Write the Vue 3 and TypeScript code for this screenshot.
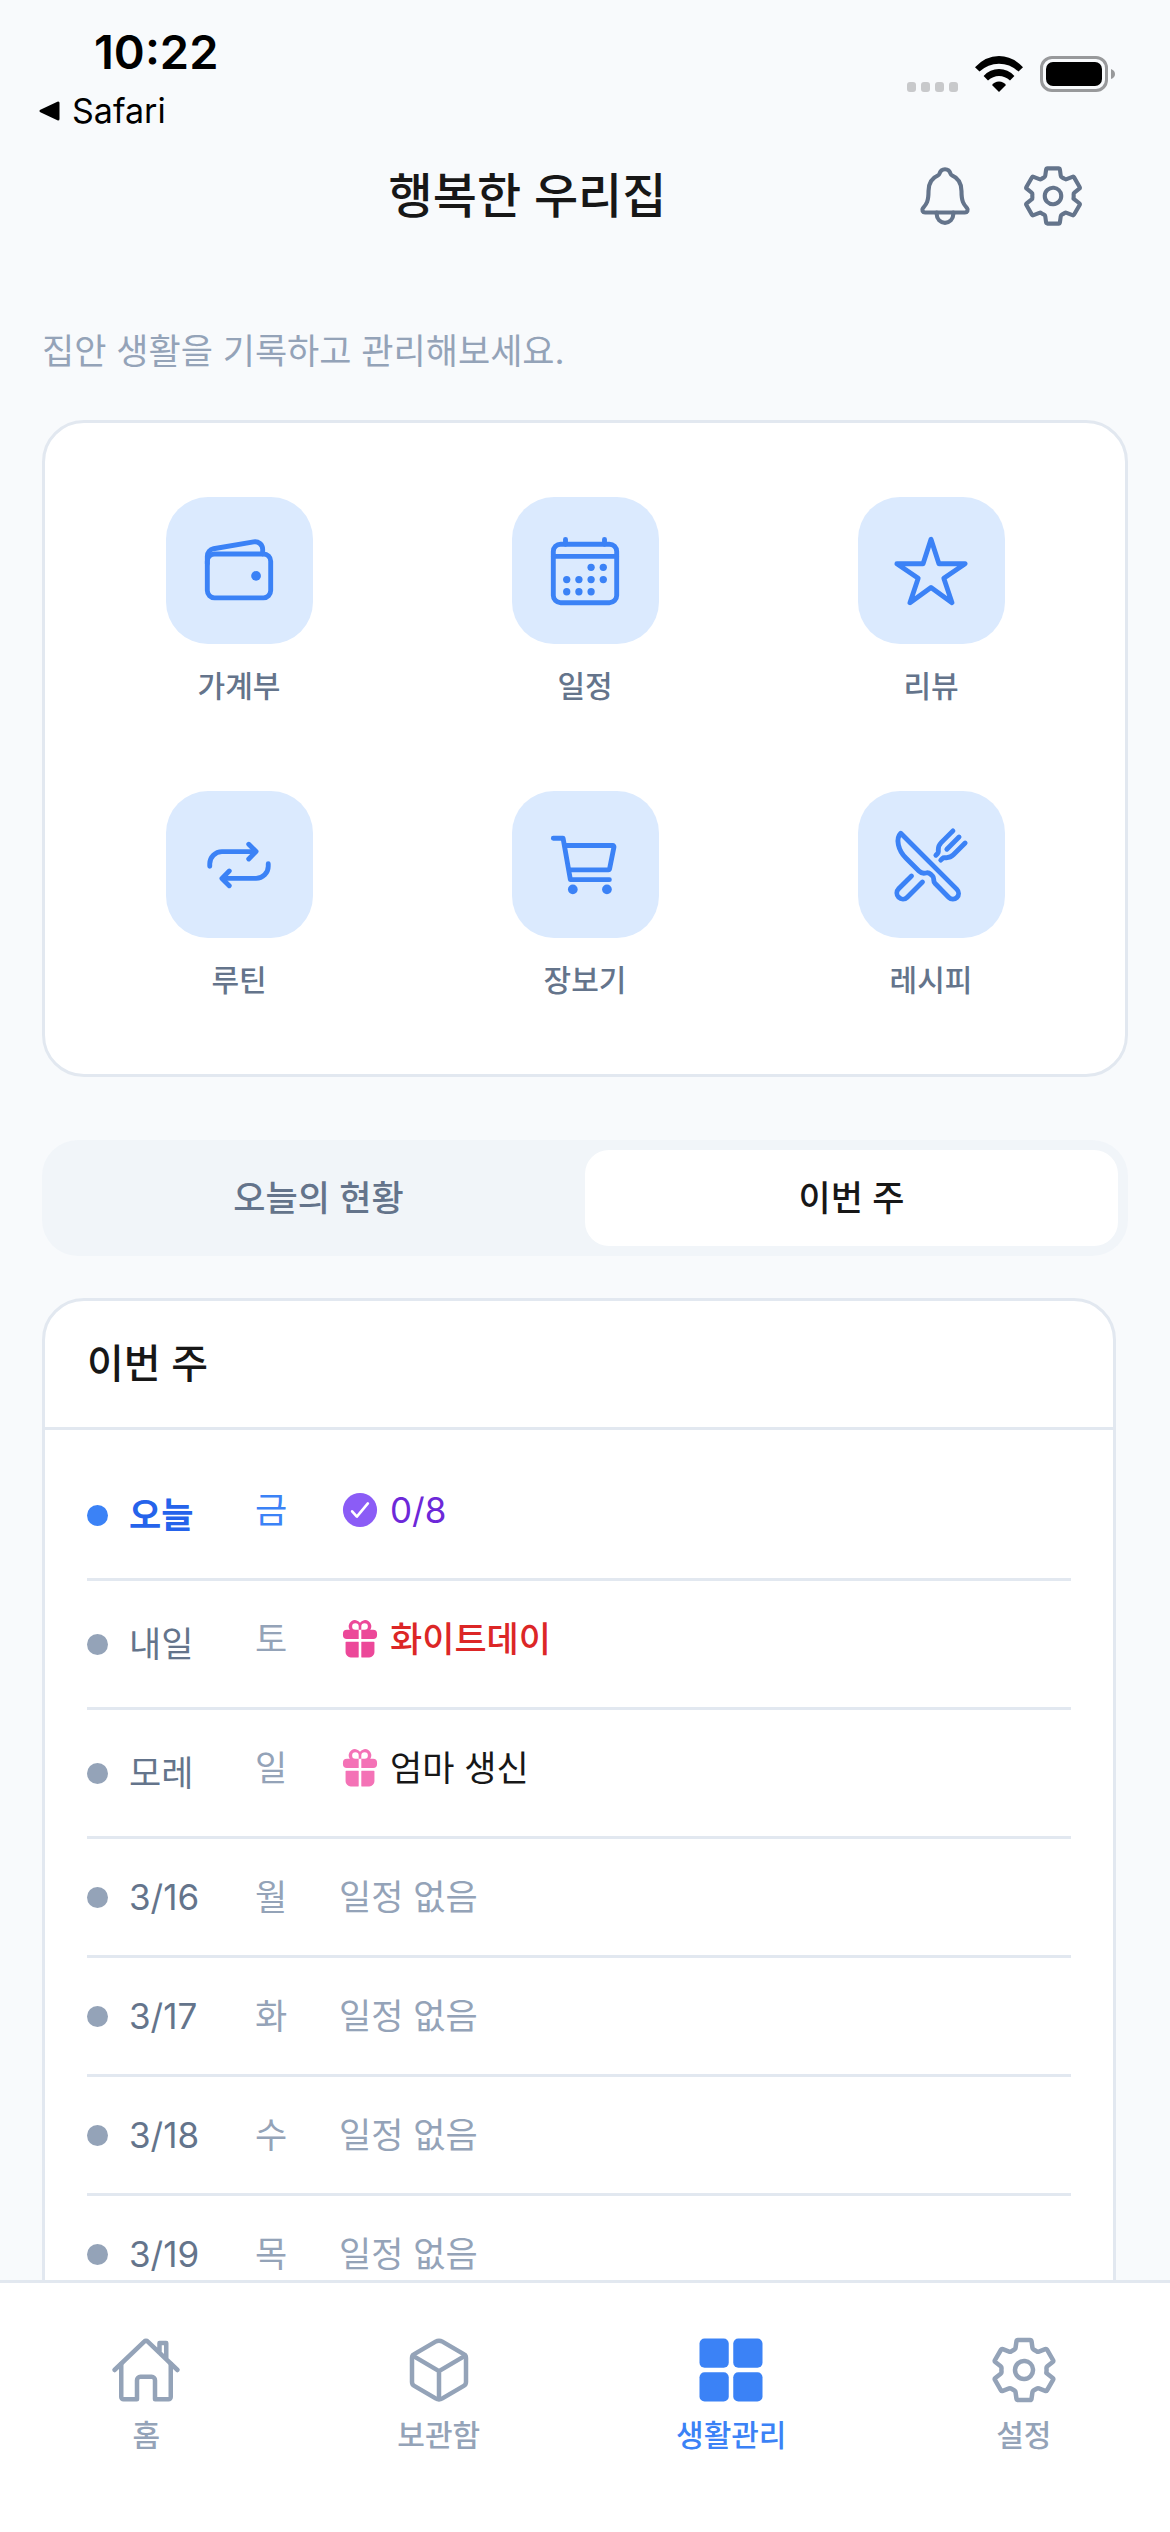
<script setup lang="ts">
import { ref } from 'vue'

interface Icon {
  strokes?: string[]
  fills?: string[]
  dots?: [number, number, number][]
}

const gear: Icon = {
  strokes: [
    'M262.29 192.31a64 64 0 1 0 57.4 57.4 64.13 64.13 0 0 0-57.4-57.4ZM416.39 256a154.34 154.34 0 0 1-1.53 20.79l45.21 35.46A10.81 10.81 0 0 1 462.52 326l-42.77 74a10.81 10.81 0 0 1-13.14 4.59l-44.9-18.08a16.11 16.11 0 0 0-15.17 1.75A164.48 164.48 0 0 1 325 400.8a15.94 15.94 0 0 0-8.82 12.14l-6.73 47.89A11.08 11.08 0 0 1 298.77 470h-85.54a11.11 11.11 0 0 1-10.69-8.87l-6.72-47.82a16.07 16.07 0 0 0-9-12.22 155.3 155.3 0 0 1-21.46-12.57 16 16 0 0 0-15.11-1.71l-44.89 18.07a10.81 10.81 0 0 1-13.14-4.58l-42.77-74a10.8 10.8 0 0 1 2.45-13.75l38.21-30a16.05 16.05 0 0 0 6-14.08c-.36-4.17-.58-8.33-.58-12.5s.21-8.27.58-12.35a16 16 0 0 0-6.07-13.94l-38.19-30A10.81 10.81 0 0 1 49.48 186l42.77-74a10.81 10.81 0 0 1 13.14-4.59l44.9 18.08a16.11 16.11 0 0 0 15.17-1.75A164.48 164.48 0 0 1 187 111.2a15.94 15.94 0 0 0 8.82-12.14l6.73-47.89A11.08 11.08 0 0 1 213.23 42h85.54a11.11 11.11 0 0 1 10.69 8.87l6.72 47.82a16.07 16.07 0 0 0 9 12.22 155.3 155.3 0 0 1 21.46 12.57 16 16 0 0 0 15.11 1.71l44.89-18.07a10.81 10.81 0 0 1 13.14 4.58l42.77 74a10.8 10.8 0 0 1-2.45 13.75l-38.21 30a16.05 16.05 0 0 0-6.05 14.08c.33 4.14.55 8.3.55 12.47Z',
  ],
}

const bell: Icon = {
  strokes: [
    'M427.68 351.43C402 320 383.87 304 383.87 217.35 383.87 138 343.35 109.73 310 96c-4.43-1.82-8.6-6-9.95-10.55C294.2 65.54 277.8 48 256 48s-38.21 17.55-44 37.47c-1.35 4.6-5.52 8.71-9.95 10.53-33.39 13.75-73.87 41.92-73.87 121.35C128.13 304 110 320 84.32 351.43 73.68 364.45 83 384 101.61 384h308.88c18.51 0 27.77-19.61 17.19-32.57Z',
    'M320 384v16a64 64 0 0 1-128 0v-16',
  ],
}

const actions: { label: string; icon: Icon }[] = [
  { label: '알림', icon: bell },
  { label: '설정', icon: gear },
]

const features: { label: string; icon: Icon }[] = [
  {
    label: '가계부',
    icon: {
      strokes: [
        'M96 144h320a48 48 0 0 1 48 48v192a48 48 0 0 1-48 48H96a48 48 0 0 1-48-48V192a48 48 0 0 1 48-48Z',
        'M411.36 144v-30A50 50 0 0 0 352 64.9L88.64 109.85A50 50 0 0 0 48 159v49',
      ],
      dots: [[368, 288, 32]],
    },
  },
  {
    label: '일정',
    icon: {
      strokes: [
        'M96 80h320a48 48 0 0 1 48 48v288a48 48 0 0 1-48 48H96a48 48 0 0 1-48-48V128a48 48 0 0 1 48-48Z',
        'M128 48v32M384 48v32M464 160H48',
      ],
      dots: [
        [296, 232, 24], [376, 232, 24],
        [136, 312, 24], [216, 312, 24], [296, 312, 24], [376, 312, 24],
        [136, 392, 24], [216, 392, 24], [296, 392, 24],
      ],
    },
  },
  {
    label: '리뷰',
    icon: { strokes: ['M480 208H308L256 48l-52 160H32l140 96-54 160 138-100 138 100-54-160Z'] },
  },
  {
    label: '루틴',
    icon: {
      strokes: [
        'M320 120l48 48-48 48',
        'M352 168H144a80.24 80.24 0 0 0-80 80v16M192 392l-48-48 48-48',
        'M160 344h208a80.24 80.24 0 0 0 80-80v-16',
      ],
    },
  },
  {
    label: '장보기',
    icon: {
      strokes: [
        'M48 80h64l48 272h256',
        'M160 288h249.44a8 8 0 0 0 7.85-6.43l28.8-144a8 8 0 0 0-7.85-9.57H128',
      ],
      dots: [[176, 416, 32], [400, 416, 32]],
    },
  },
  {
    label: '레시피',
    icon: {
      strokes: [
        'M57.49 47.74l368.43 368.43a37.28 37.28 0 0 1 0 52.72 37.29 37.29 0 0 1-52.72 0l-90-91.55a32 32 0 0 1-9.2-22.43v-5.53a32 32 0 0 0-9.52-22.78l-11.62-10.73a32 32 0 0 0-29.8-7.44 48.53 48.53 0 0 1-46.56-12.63l-85.43-85.44C40.39 159.68 21.74 83.15 57.49 47.74Z',
        'M400 32l-77.25 77.25A64 64 0 0 0 304 154.51v14.86a16 16 0 0 1-4.69 11.32L288 192M320 224l11.31-11.31a16 16 0 0 1 11.32-4.69h14.86a64 64 0 0 0 45.26-18.75L480 112M440 72l-80 80M200 368l-99.72 100.28a40 40 0 0 1-56.56 0 40 40 0 0 1 0-56.56L128 328',
      ],
    },
  },
]

const tabs = ['오늘의 현황', '이번 주']
const activeTab = ref(1)

type EventKind = 'routine' | 'holiday' | 'birthday'

interface Day {
  date: string
  weekday: string
  today?: boolean
  event?: { kind: EventKind; text: string }
}

const week: Day[] = [
  { date: '오늘', weekday: '금', today: true, event: { kind: 'routine', text: '0/8' } },
  { date: '내일', weekday: '토', event: { kind: 'holiday', text: '화이트데이' } },
  { date: '모레', weekday: '일', event: { kind: 'birthday', text: '엄마 생신' } },
  { date: '3/16', weekday: '월' },
  { date: '3/17', weekday: '화' },
  { date: '3/18', weekday: '수' },
  { date: '3/19', weekday: '목' },
]

const navItems: { label: string; icon: Icon; active?: boolean }[] = [
  {
    label: '홈',
    icon: {
      strokes: [
        'M80 212v236a16 16 0 0 0 16 16h96V328a24 24 0 0 1 24-24h80a24 24 0 0 1 24 24v136h96a16 16 0 0 0 16-16V212',
        'M480 256L266.89 52c-5-5.28-16.69-5.34-21.78 0L32 256M400 179V64h-48v69',
      ],
    },
  },
  {
    label: '보관함',
    icon: {
      strokes: [
        'M448 341.37V170.61A32 32 0 0 0 432.11 143l-152-88.46a47.94 47.94 0 0 0-48.24 0L79.89 143A32 32 0 0 0 64 170.61v170.76A32 32 0 0 0 79.89 369l152 88.46a48 48 0 0 0 48.24 0l152-88.46A32 32 0 0 0 448 341.37Z',
        'M69 153.99l187 110 187-110M256 463.99v-200',
      ],
    },
  },
  {
    label: '생활관리',
    active: true,
    icon: {
      fills: [
        'M68 32h136a36 36 0 0 1 36 36v136a36 36 0 0 1-36 36H68a36 36 0 0 1-36-36V68a36 36 0 0 1 36-36Z',
        'M308 32h136a36 36 0 0 1 36 36v136a36 36 0 0 1-36 36H308a36 36 0 0 1-36-36V68a36 36 0 0 1 36-36Z',
        'M68 272h136a36 36 0 0 1 36 36v136a36 36 0 0 1-36 36H68a36 36 0 0 1-36-36V308a36 36 0 0 1 36-36Z',
        'M308 272h136a36 36 0 0 1 36 36v136a36 36 0 0 1-36 36H308a36 36 0 0 1-36-36V308a36 36 0 0 1 36-36Z',
      ],
    },
  },
  { label: '설정', icon: gear },
]
</script>

<template>
  <div class="app">
    <div class="status">
      <div class="status-left">
        <span class="clock">10:22</span>
        <a class="back" href="#">
          <svg class="back-arrow" viewBox="0 0 22 20" aria-hidden="true">
            <path d="M20 2v16L3 10Z" fill="currentColor" stroke="currentColor" stroke-width="3" stroke-linejoin="round" />
          </svg>
          Safari
        </a>
      </div>
      <div class="status-right" aria-hidden="true">
        <svg class="signal" viewBox="0 0 51 36">
          <rect v-for="i in 4" :key="i" :x="(i - 1) * 14" y="26" width="9" height="10" rx="3" fill="#c8c9cb" />
        </svg>
        <svg class="wifi" viewBox="0 0 48 36">
          <path d="M0 11.2Q10.500 0 24 0T48 11.200L43.500 15.600Q35 7.700 24 7.700T4.500 15.600Z" fill="#000" />
          <path d="M8.600 19.900Q15 13 24 13T39.400 19.900L35 24.500Q30 20 24 20T13 24.500Z" fill="#000" />
          <path d="M17 29Q19.500 25.500 24 25.500T31 29L24 36Z" fill="#000" />
        </svg>
        <svg class="battery" viewBox="0 0 75 36">
          <rect x="1.500" y="1.500" width="65" height="33" rx="10.500" fill="none" stroke="#98999b" stroke-width="3" />
          <rect x="6" y="6" width="56" height="24" rx="7" fill="#000" />
          <path d="M71 13q4 1.500 4 5t-4 5Z" fill="#98999b" />
        </svg>
      </div>
    </div>

    <header class="header">
      <h1 class="title">행복한 우리집</h1>
      <button v-for="action in actions" :key="action.label" class="action" type="button" :aria-label="action.label">
        <svg class="icon icon-action" viewBox="0 0 512 512">
          <path v-for="d in action.icon.strokes" :key="d" :d="d" />
        </svg>
      </button>
    </header>

    <main class="content">
      <p class="subtitle">집안 생활을 기록하고 관리해보세요.</p>

      <section class="features">
        <a v-for="feature in features" :key="feature.label" class="feature" href="#">
          <span class="tile">
            <svg class="icon icon-feature" viewBox="0 0 512 512" aria-hidden="true">
              <path v-for="d in feature.icon.strokes" :key="d" :d="d" />
              <circle v-for="[cx, cy, r] in feature.icon.dots" :key="`${cx}-${cy}`" class="solid" :cx="cx" :cy="cy" :r="r" />
            </svg>
          </span>
          <span class="small-label">{{ feature.label }}</span>
        </a>
      </section>

      <div class="tabs" role="tablist">
        <button
          v-for="(tab, i) in tabs"
          :key="tab"
          class="tab"
          :class="{ active: i === activeTab }"
          type="button"
          role="tab"
          :aria-selected="i === activeTab"
          @click="activeTab = i"
        >
          {{ tab }}
        </button>
      </div>

      <section class="week">
        <h2 class="week-title">이번 주</h2>
        <ul class="days">
          <li v-for="day in week" :key="day.date" class="day" :class="{ today: day.today }">
            <span class="dot"></span>
            <span class="date">{{ day.date }}</span>
            <div class="plan" :class="{ filled: day.event }">
              <span class="weekday">{{ day.weekday }}</span>
              <span v-if="day.event" class="event" :class="day.event.kind">
                <svg class="event-icon" viewBox="0 0 512 512" aria-hidden="true">
                  <template v-if="day.event.kind === 'routine'">
                    <circle cx="256" cy="256" r="208" fill="currentColor" />
                    <path d="M352 176L217.600 336 160 272" fill="none" stroke="#fff" stroke-width="32" stroke-linecap="round" stroke-linejoin="round" />
                  </template>
                  <template v-else>
                    <path
                      fill="currentColor"
                      fill-rule="evenodd"
                      d="M240 144v108a4 4 0 0 1-4 4H96a48 48 0 0 1-48-48v-16a48 48 0 0 1 48-48h35.220A72 72 0 0 1 256 58.910 72 72 0 0 1 380.780 144H416a48 48 0 0 1 48 48v16a48 48 0 0 1-48 48H276a4 4 0 0 1-4-4V144ZM200 144h40v-40a40 40 0 1 0-40 40ZM272 104v40h40a40 40 0 1 0-40-40Z"
                    />
                    <path fill="currentColor" d="M88 288h148a4 4 0 0 1 4 4v184a4 4 0 0 1-4 4h-92a64 64 0 0 1-64-64V296a8 8 0 0 1 8-8ZM276 288h148a8 8 0 0 1 8 8v120a64 64 0 0 1-64 64h-92a4 4 0 0 1-4-4V292a4 4 0 0 1 4-4Z" />
                  </template>
                </svg>
                <span class="event-text">{{ day.event.text }}</span>
              </span>
              <span v-else class="empty">일정 없음</span>
            </div>
          </li>
        </ul>
      </section>
    </main>

    <nav class="nav">
      <a v-for="item in navItems" :key="item.label" class="nav-item" :class="{ active: item.active }" href="#">
        <svg class="icon icon-nav" viewBox="0 0 512 512" aria-hidden="true">
          <path v-for="d in item.icon.strokes" :key="d" :d="d" />
          <path v-for="d in item.icon.fills" :key="d" class="solid" :d="d" />
        </svg>
        <span>{{ item.label }}</span>
      </a>
    </nav>
  </div>
</template>

<style>
body {
  margin: 0;
  background: #f8fafc;
}
</style>

<style scoped>
.app {
  display: flex;
  flex-direction: column;
  height: 100vh;
  overflow: hidden;
  background: #f8fafc;
  color: #171717;
  font-family: Inter, "Noto Sans CJK KR", sans-serif;
  font-size: 35px;
  line-height: 52px;
}

a {
  color: inherit;
  text-decoration: none;
}

button {
  padding: 0;
  border: 0;
  background: none;
  color: inherit;
  font: inherit;
}

.icon {
  display: block;
  fill: none;
  stroke: currentColor;
  stroke-width: 32px;
  stroke-linecap: round;
  stroke-linejoin: round;
}

.solid {
  fill: currentColor;
  stroke: none;
}

.status {
  display: flex;
  flex: none;
  justify-content: space-between;
  height: 141px;
  color: #000;
}

.status-left {
  display: flex;
  flex-direction: column;
  padding: 26px 0 0 38px;
}

.clock {
  padding-left: 56px;
  font-size: 47px;
  font-weight: 600;
}

.back {
  display: flex;
  align-items: center;
  gap: 12px;
  margin-top: 7px;
  font-size: 34px;
}

.back-arrow {
  width: 22px;
  height: 20px;
}

.status-right {
  display: flex;
  gap: 17px;
  padding: 56px 55px 0 0;
}

.status-right svg {
  height: 36px;
}

.signal {
  width: 51px;
}

.wifi {
  width: 48px;
}

.battery {
  width: 75px;
}

.header {
  display: flex;
  flex: none;
  align-items: center;
  height: 110px;
  padding: 0 63px 0 164px;
}

.title {
  flex: 1;
  margin: 0;
  font-size: 48px;
  font-weight: 500;
  text-align: center;
}

.action {
  padding: 21px;
  color: #64748b;
}

.icon-action {
  width: 66px;
  height: 66px;
}

.content {
  flex: 1;
  min-height: 0;
  overflow: hidden;
  padding: 74px 42px 0;
}

.subtitle {
  margin: 0 0 43px;
  color: #94a3b8;
}

.features {
  display: grid;
  grid-template-columns: repeat(3, 1fr);
  padding: 32px 21px 31px;
  border: 3px solid #e2e8f0;
  border-radius: 42px;
  background: #fff;
}

.feature {
  display: flex;
  flex-direction: column;
  align-items: center;
  gap: 21px;
  padding: 42px 0;
}

.tile {
  display: flex;
  align-items: center;
  justify-content: center;
  width: 147px;
  height: 147px;
  border-radius: 42px;
  background: #dbeafe;
  color: #3b82f6;
}

.icon-feature {
  width: 78px;
  height: 78px;
}

.small-label {
  color: #64748b;
  font-size: 30px;
  font-weight: 500;
  line-height: 42px;
}

.tabs {
  display: flex;
  margin: 63px 0 42px;
  padding: 10px;
  border-radius: 36px;
  background: #f1f5f9;
}

.tab {
  flex: 1;
  height: 96px;
  border-radius: 24px;
  color: #64748b;
  font-weight: 500;
}

.tab.active {
  background: #fff;
  color: #171717;
}

.week {
  margin-right: 12px;
  border: 3px solid #e2e8f0;
  border-radius: 42px;
  background: #fff;
}

.week-title {
  margin: 0;
  padding: 37px 42px;
  border-bottom: 3px solid #e2e8f0;
  font-size: 40px;
  font-weight: 500;
}

.days {
  margin: 0;
  padding: 22px 42px;
  list-style: none;
}

.day {
  display: flex;
  align-items: center;
  gap: 21px;
  padding: 32px 0;
  border-bottom: 3px solid #e2e8f0;
}

.dot {
  width: 21px;
  height: 21px;
  border-radius: 50%;
  background: #94a3b8;
}

.date {
  width: 105px;
  color: #64748b;
}

.plan {
  display: flex;
  flex: 1;
  gap: 21px;
  color: #94a3b8;
}

.plan.filled {
  padding-bottom: 10px;
}

.weekday {
  width: 63px;
}

.event {
  display: flex;
  align-items: center;
  gap: 9px;
}

.event-icon {
  width: 42px;
  height: 42px;
}

.today .dot {
  background: #3b82f6;
}

.today .date {
  color: #2563eb;
  font-weight: 600;
}

.today .weekday {
  color: #3b82f6;
}

.routine {
  color: #8b5cf6;
}

.routine .event-text {
  color: #6d28d9;
}

.holiday {
  color: #ec4899;
}

.holiday .event-text {
  color: #dc2626;
  font-weight: 500;
}

.birthday {
  color: #f472b6;
}

.birthday .event-text {
  color: #171717;
}

.nav {
  display: flex;
  flex: none;
  padding: 51px 0 76px;
  border-top: 3px solid #e2e8f0;
  background: #fff;
}

.nav-item {
  display: flex;
  flex: 1;
  flex-direction: column;
  align-items: center;
  gap: 8px;
  color: #94a3b8;
  font-size: 30px;
  font-weight: 500;
  line-height: 42px;
}

.nav-item.active {
  color: #3b82f6;
}

.icon-nav {
  width: 72px;
  height: 72px;
}
</style>
